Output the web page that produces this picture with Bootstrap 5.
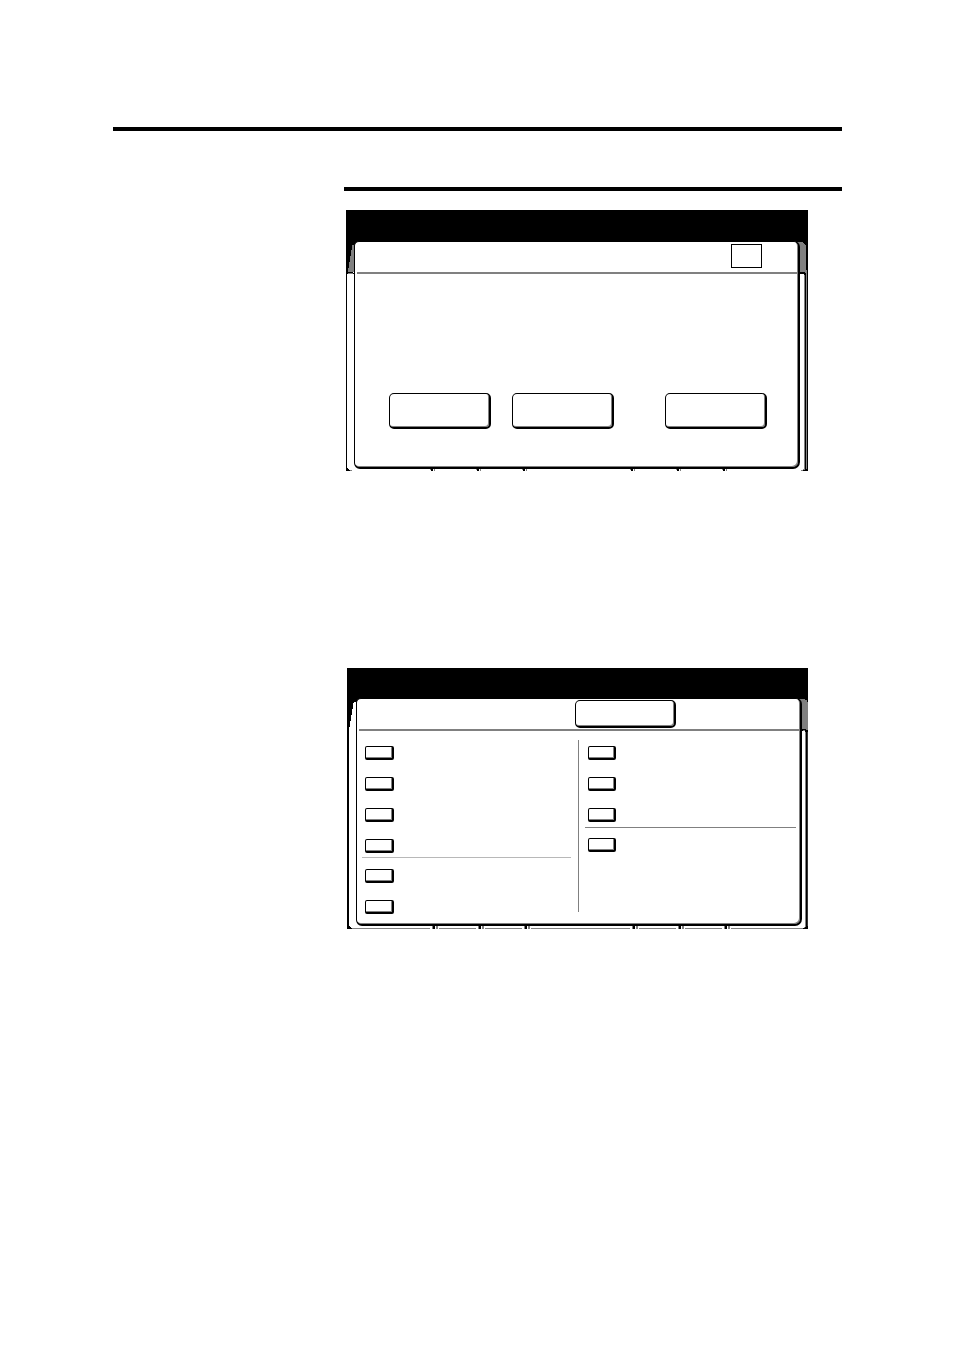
<!DOCTYPE html>
<html lang="en">
<head>
<meta charset="utf-8">
<meta name="viewport" content="width=device-width, initial-scale=1">
<title>Touch panel screens</title>
<link href="https://cdn.jsdelivr.net/npm/bootstrap@5.3.0/dist/css/bootstrap.min.css" rel="stylesheet">
<style>
  body { background: #fff; font-family: "Liberation Sans", Arial, sans-serif; }
  svg { display: block; flex: none; shape-rendering: crispEdges; }
  .sheet { padding: 127px 112px 0 113px; }
  .rule { height: 4px; background: #000; }
  .content-col { margin: 56px 0 0 231px; }
  .panel { margin: 19px 34px 0 2px; }
  .panel-list { margin: 197px 34px 0 3px; }
  .titlebar { height: 31px; background: #000; }
  .panel-list .titlebar { height: 30px; }
  .centre {
    background: linear-gradient(#808080, #808080) right top 1px / 6px 8px no-repeat,
                linear-gradient(#000, #000) top / 100% 8px no-repeat;
  }
  .window {
    background: #fff; border: 1px solid #000; border-width: 1px 2px 2px 1px;
    border-radius: 5px 6px 7px 6px; box-shadow: inset -1px -1px #808080;
    height: 228px;
  }
  .window-head { height: 32px; margin-left: 2px; border-bottom: 2px solid #808080; }
  .page-box { width: 31px; height: 24px; border: 1px solid #000; margin: 2px 36px 0 0; }
  .key {
    background: #fff; border: 1px solid #000; border-width: 1px 2px 2px 1px;
    border-radius: 5px; box-shadow: inset -1px -1px #808080; padding: 0;
  }
  .key-wide { width: 102px; height: 36px; }
  .key-head { width: 101px; height: 28px; margin: 1px 124px 0 0; }
  .key-small { width: 29px; height: 14px; border-radius: 2px; }
  .col-keys-right .key-small { width: 28px; }
  .key-row { padding: 119px 31px 0 34px; }
  .gap-keys { margin-left: 21px; }
  .lists { padding: 9px 4px 0 5px; }
  .lists .key-small { margin-left: 3px; }
  .col-keys { width: 209px; padding-top: 6px; gap: 17px; }
  .col-keys-right { width: 211px; }
  .split { width: 1px; height: 172px; background: #808080; margin: 0 6px 0 7px; }
  .divider { height: 1px; margin: -13px 0 -6px; background: #b8b8b8; }
  .divider-dark { background: #808080; margin: -12px 0 -7px; }
  .rail-left { width: 8px; }
  .rail-left .stretch { border-left: 1px solid #000; }
  .rail-right { width: 8px; }
  .rail-right .stretch { background: linear-gradient(90deg, #fff 4px, #808080 4px 5px, #000 5px 6px, #808080 6px 7px, #000 7px); }
  .panel-list .rail-left { width: 9px; }
  .panel-list .rail-left .stretch { border-left: 2px solid #000; }
  .panel-list .rail-right { width: 6px; }
  .panel-list .rail-right .stretch { background: linear-gradient(90deg, #fff 3px, #808080 3px 4px, #000 4px 5px, #333 5px); }
</style>
</head>
<body>
<main class="sheet">
  <div class="rule"></div>
  <div class="content-col">
    <div class="rule"></div>

    <section class="panel" aria-label="Confirmation screen">
      <div class="titlebar"></div>
      <div class="d-flex">
        <div class="rail-left d-flex flex-column">
          <svg width="8" height="34" viewBox="0 0 8 34"><path fill="#000" d="M0 0h8v34H0z"/><path fill="#808080" d="M6 4h2v27H2v-4h1v-6h1v-6h1V9h1z"/><path fill="#fff" d="M7 31h1v1H7zM3 33h5v1H1v-1z"/><path fill="#808080" d="M2 32h5v1H2z"/></svg>
          <div class="stretch flex-grow-1"></div>
          <svg width="8" height="3" viewBox="0 0 8 3"><path d="M0 0h2v1h1v1h1v1H0z"/><path fill="#808080" d="M4 2h2v1H4z"/></svg>
        </div>
        <div class="centre flex-grow-1">
          <div class="window">
            <div class="window-head d-flex justify-content-end align-items-start"><div class="page-box"></div></div>
            <div class="key-row d-flex">
              <button type="button" class="key key-wide" aria-label="Key 1"></button>
              <button type="button" class="key key-wide gap-keys me-auto" aria-label="Key 2"></button>
              <button type="button" class="key key-wide" aria-label="Key 3"></button>
            </div>
          </div>
          <svg width="446" height="2" viewBox="0 0 446 2"><defs><g id="tick"><path fill="#808080" d="M0 0h1v1H0zM4 0h1v2H4z"/><path d="M1 0h2v2H1z"/></g></defs><use href="#tick" x="76"/><use href="#tick" x="122"/><use href="#tick" x="168"/><use href="#tick" x="276"/><use href="#tick" x="322"/><use href="#tick" x="368"/></svg>
        </div>
        <div class="rail-right d-flex flex-column">
          <svg width="8" height="34" viewBox="0 0 8 34"><path fill="#000" d="M0 0h8v34H0z"/><path fill="#808080" d="M0 1h3v1h1v1h1v1h1v25h1v5H6v-2H5v-1H0z"/><path fill="#fff" d="M0 33h4v1H0z"/></svg>
          <div class="stretch flex-grow-1"></div>
          <svg width="8" height="2" viewBox="0 0 8 2"><path fill="#808080" d="M1 1h2V0h2v2H1z"/><path d="M5 0h3v2H3V1h2z"/></svg>
        </div>
      </div>
    </section>

    <section class="panel-list" aria-label="Selection screen">
      <div class="titlebar"></div>
      <div class="d-flex">
        <div class="rail-left d-flex flex-column">
          <svg width="9" height="33" viewBox="0 0 9 33"><path d="M0 0h9v33H0z"/><path fill="#fff" d="M7 4h2v29H2v-4h1v-6h1v-6h1v-6h1V5h1z"/></svg>
          <div class="stretch flex-grow-1"></div>
          <svg width="9" height="3" viewBox="0 0 9 3"><path d="M0 0h3v1h1v1h1v1H0z"/><path fill="#808080" d="M5 2h4v1H5z"/></svg>
        </div>
        <div class="centre flex-grow-1">
          <div class="window">
            <div class="window-head d-flex justify-content-end align-items-start"><button type="button" class="key key-head" aria-label="Top key"></button></div>
            <div class="lists d-flex">
              <div class="col-keys d-flex flex-column">
                <button type="button" class="key key-small" aria-label="Option 1"></button>
                <button type="button" class="key key-small" aria-label="Option 2"></button>
                <button type="button" class="key key-small" aria-label="Option 3"></button>
                <button type="button" class="key key-small" aria-label="Option 4"></button>
                <div class="divider"></div>
                <button type="button" class="key key-small" aria-label="Option 5"></button>
                <button type="button" class="key key-small" aria-label="Option 6"></button>
              </div>
              <div class="split"></div>
              <div class="col-keys col-keys-right d-flex flex-column">
                <button type="button" class="key key-small" aria-label="Option 7"></button>
                <button type="button" class="key key-small" aria-label="Option 8"></button>
                <button type="button" class="key key-small" aria-label="Option 9"></button>
                <div class="divider divider-dark"></div>
                <button type="button" class="key key-small" aria-label="Option 10"></button>
              </div>
            </div>
          </div>
          <svg width="446" height="3" viewBox="0 0 446 3"><path fill="#808080" d="M0 2h446v1H0z"/><defs><g id="tab-tick"><path fill="#fff" d="M-2 0h9v3h-9z"/><path fill="#808080" d="M0 0h1v3H0zM4 0h2v3H4z"/><path d="M1 0h2v3H1z"/></g></defs><use href="#tab-tick" x="76"/><use href="#tab-tick" x="122"/><use href="#tab-tick" x="168"/><use href="#tab-tick" x="276"/><use href="#tab-tick" x="322"/><use href="#tab-tick" x="368"/></svg>
        </div>
        <div class="rail-right d-flex flex-column">
          <svg width="6" height="34" viewBox="0 0 6 34"><path d="M0 0h6v34H0z"/><path fill="#808080" d="M0 1h3v1h2v2h1v27H0z"/><path fill="#fff" d="M0 33h3v1H0z"/><path fill="#808080" d="M1 32h2v1H1zM4 30h2v2H4z"/></svg>
          <div class="stretch flex-grow-1"></div>
          <svg width="6" height="3" viewBox="0 0 6 3"><path fill="#808080" d="M0 2h2V1h1V0h2v3H0z"/><path d="M4 0h2v3H1V2h2V1h1z"/></svg>
        </div>
      </div>
    </section>
  </div>
</main>
<script src="https://cdn.jsdelivr.net/npm/bootstrap@5.3.0/dist/js/bootstrap.bundle.min.js"></script>
</body>
</html>
